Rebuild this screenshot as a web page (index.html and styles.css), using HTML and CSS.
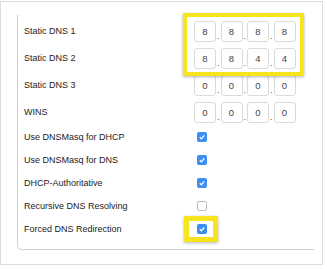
FILE: index.html
```html
<!DOCTYPE html>
<html lang="en">

<head>
    <meta charset="UTF-8">
    <title>DNS settings</title>
    <link rel="stylesheet" href="styles.css">
</head>

<body>
    <div class="frame">
        <div class="panel">
            <div class="row ip_row">
                <div class="label">Static DNS 1</div>
                <div class="ip">
                    <div class="octet">8</div><span class="dot">.</span><div class="octet">8</div><span class="dot">.</span><div class="octet">8</div><span class="dot">.</span><div class="octet">8</div>
                </div>
            </div>
            <div class="row ip_row">
                <div class="label">Static DNS 2</div>
                <div class="ip">
                    <div class="octet">8</div><span class="dot">.</span><div class="octet">8</div><span class="dot">.</span><div class="octet">4</div><span class="dot">.</span><div class="octet">4</div>
                </div>
            </div>
            <div class="row ip_row">
                <div class="label">Static DNS 3</div>
                <div class="ip">
                    <div class="octet">0</div><span class="dot">.</span><div class="octet">0</div><span class="dot">.</span><div class="octet">0</div><span class="dot">.</span><div class="octet">0</div>
                </div>
            </div>
            <div class="row ip_row">
                <div class="label">WINS</div>
                <div class="ip">
                    <div class="octet">0</div><span class="dot">.</span><div class="octet">0</div><span class="dot">.</span><div class="octet">0</div><span class="dot">.</span><div class="octet">0</div>
                </div>
            </div>
            <div class="row">
                <div class="label">Use DNSMasq for DHCP</div>
                <div class="check on"><svg viewBox="0 0 10 10"><path d="M2.8 5.3 L4.4 6.9 L7.3 3.4"/></svg></div>
            </div>
            <div class="row">
                <div class="label">Use DNSMasq for DNS</div>
                <div class="check on"><svg viewBox="0 0 10 10"><path d="M2.8 5.3 L4.4 6.9 L7.3 3.4"/></svg></div>
            </div>
            <div class="row">
                <div class="label">DHCP-Authoritative</div>
                <div class="check on"><svg viewBox="0 0 10 10"><path d="M2.8 5.3 L4.4 6.9 L7.3 3.4"/></svg></div>
            </div>
            <div class="row">
                <div class="label">Recursive DNS Resolving</div>
                <div class="check"></div>
            </div>
            <div class="row">
                <div class="label">Forced DNS Redirection</div>
                <div class="check on"><svg viewBox="0 0 10 10"><path d="M2.8 5.3 L4.4 6.9 L7.3 3.4"/></svg></div>
            </div>

            <!-- highlight marks drawn over the form -->
            <div class="mark mark_dns"></div>
            <div class="mark mark_forced"></div>
        </div>
    </div>
</body>

</html>
```

FILE: styles.css
```css
body {
    margin: 0px;
    background-color: #ffffff;
}

* {
    font-family: 'Liberation Sans', Arial, sans-serif;
}

.frame {
    margin-top: 1px;
    width: 323px;
    height: 264px;
    border: 1px solid #dcdcdc;
    box-sizing: border-box;
    padding: 13px 0 0 16px;
}

.panel {
    position: relative;
    width: 297px;
    box-sizing: border-box;
    border-left: 1px solid #cfcfcf;
    border-bottom: 1px solid #cfcfcf;
    border-bottom-left-radius: 5px;
    padding: 2.5px 0 8.5px 6px;
}

.row {
    display: flex;
    align-items: center;
    height: 23px;
}

.ip_row {
    height: 27px;
}

.label {
    width: 170px;
    font-size: 9px;
    color: #222222;
}

.ip {
    display: flex;
    align-items: center;
}

.octet {
    width: 22px;
    height: 21px;
    box-sizing: border-box;
    border: 1px solid #dadada;
    border-radius: 3px;
    display: flex;
    align-items: center;
    justify-content: center;
    font-size: 9.5px;
    color: #444444;
}

.dot {
    width: 4.5px;
    text-align: center;
    font-size: 9px;
    color: #555555;
    align-self: flex-end;
    line-height: 12px;
}

.check {
    width: 10px;
    height: 10px;
    margin-left: 3px;
    box-sizing: border-box;
    border: 1px solid #bdbdbd;
    border-radius: 2px;
    background-color: #ffffff;
}

.check.on {
    border: none;
    background-color: #3c8ef2;
}

.check svg {
    display: block;
    width: 10px;
    height: 10px;
}

.check path {
    fill: none;
    stroke: #ffffff;
    stroke-width: 1.3;
}

.mark {
    position: absolute;
    box-sizing: border-box;
    border: 4px solid #f6e41e;
    box-shadow: rgba(0, 0, 0, 0.3) 0px 1px 3px;
}

.mark_dns {
    left: 165px;
    top: -2px;
    width: 121px;
    height: 63px;
}

.mark_forced {
    left: 166px;
    top: 201px;
    width: 34px;
    height: 26px;
    border-width: 5px;
}
```
